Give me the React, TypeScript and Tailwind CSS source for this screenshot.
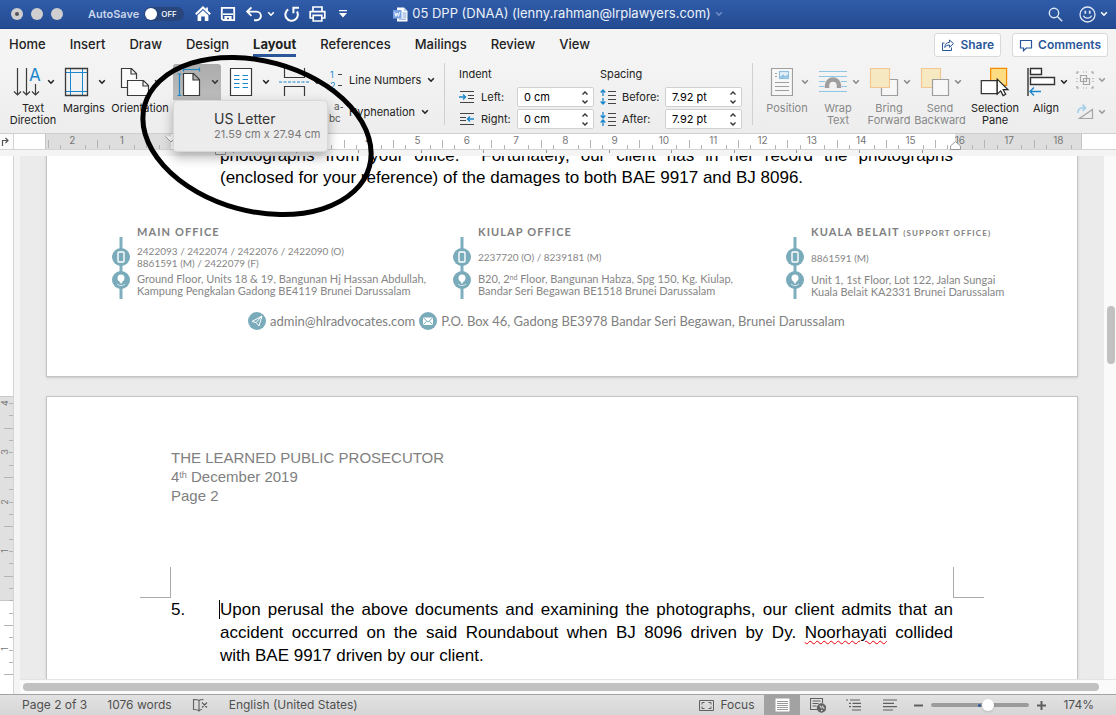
import React, { useState } from 'react';

const CM = 49.3;

const Chevron = ({ className = '' }: { className?: string }) => (
  <svg width="8" height="6" viewBox="0 0 8 6" fill="none" stroke="currentColor" strokeWidth="1.6" className={className}>
    <path d="M1.2 1.2 4 4.2 6.8 1.2" />
  </svg>
);

/* ---------- title bar ---------- */

const TitleBar = () => {
  const [autoSave, setAutoSave] = useState(false);

  return (
    <header className="grid h-[29px] shrink-0 grid-cols-[1fr_auto_1fr] items-center border-b border-[#1f4485] bg-linear-to-b from-[#305ca9] to-[#234b92] text-white">
      <div className="flex items-center pl-[11px]">
        <div className="flex gap-2">
          <span className="flex size-3 items-center justify-center rounded-full bg-[#cfcfcf]">
            <span className="size-1 rounded-full bg-[#555]" />
          </span>
          <span className="size-3 rounded-full bg-[#cfcfcf]" />
          <span className="size-3 rounded-full bg-[#cfcfcf]" />
        </div>
        <label className="ml-[25px] flex items-center gap-[5px] text-[11px] font-semibold text-[#c9d5ea]">
          AutoSave
          <input
            type="checkbox"
            className="peer sr-only"
            checked={autoSave}
            onChange={() => setAutoSave(!autoSave)}
          />
          <span className="flex h-3.5 w-10 items-center gap-1 rounded-full bg-[#28467c] pl-px text-[8px] font-medium text-white">
            <span className="size-3 rounded-full bg-white" />
            {autoSave ? 'ON' : 'OFF'}
          </span>
        </label>
        <div className="ml-[11px] flex items-center gap-[9px]">
          <button aria-label="Home">
            <svg width="16" height="16" viewBox="0 0 16 16" fill="none">
              <path d="M.8 8.2 8 1.4l7.2 6.8" stroke="#fff" strokeWidth="2" />
              <path d="M2.6 9.3 8 4.3l5.4 5V15H9.8v-4.6H6.2V15H2.6z" fill="#fff" />
              <path d="M12 1.5v3.2" stroke="#fff" strokeWidth="1.8" />
            </svg>
          </button>
          <button aria-label="Save">
            <svg width="16" height="16" viewBox="0 0 16 16" fill="none">
              <path d="M1.8 1.8h12.4v12.4H3.4L1.8 12.8z" stroke="#fff" strokeWidth="1.8" />
              <path d="M3 8.2h10" stroke="#fff" strokeWidth="1.6" />
              <path d="M4.4 10h7.2v4.4H9v-2.6H7v2.6H4.4z" fill="#fff" />
            </svg>
          </button>
          <button aria-label="Undo" className="flex items-center gap-1">
            <svg width="18" height="16" viewBox="0 0 18 16" fill="none" stroke="#fff" strokeWidth="1.9">
              <path d="M6.4 1.4 2.2 5.6l4.2 4.2M2.4 5.6h9.2a4.2 4.2 0 0 1 0 8.6H9" />
            </svg>
            <Chevron />
          </button>
          <button aria-label="Redo">
            <svg width="16" height="16" viewBox="0 0 16 16" fill="none" stroke="#fff" strokeWidth="2">
              <path d="M4.200 3.400A6.200 6.200 0 1 0 13 5.500M9.400 7.200V1.800H15" />
            </svg>
          </button>
          <button aria-label="Print">
            <svg width="17" height="16" viewBox="0 0 17 16" fill="none" stroke="#fff" strokeWidth="1.7">
              <path d="M4 5.4V1h9v4.4M4 12H1.2V5.6h14.6V12H13M4.2 9.4h8.6V15H4.2z" />
            </svg>
          </button>
          <button aria-label="Customize toolbar" className="ml-1">
            <svg width="8" height="8" viewBox="0 0 8 8" fill="#fff">
              <path d="M0 0h8v1.2H0zM0 3h8L4 7.4z" />
            </svg>
          </button>
        </div>
      </div>
      <div className="flex items-center gap-1 text-[13px] text-[#edf2fa]">
        <svg width="15" height="15" viewBox="0 0 15 15">
          <path d="M4 .5h7L14.5 4v10.5H4z" fill="#fff" />
          <path d="M11 .5V4h3.5z" fill="#b9cbe8" />
          <path d="M9.5 6h4M9.5 8h4M9.5 10h4M6 12.2h7" stroke="#7d9fd6" />
          <rect y="3" width="8.5" height="8.5" fill="#7ba3e4" />
          <path d="m1.700 5.300 1.200 4 1.300-3.400 1.300 3.400 1.200-4" fill="none" stroke="#fff" />
        </svg>
        <h1>05 DPP (DNAA) (lenny.rahman@lrplawyers.com)</h1>
        <Chevron className="text-[#6f8fc6]" />
      </div>
      <div className="flex items-center justify-end pr-[8px]">
        <button aria-label="Search">
          <svg width="15" height="15" viewBox="0 0 15 15" fill="none" stroke="#dfe7f4" strokeWidth="1.4">
            <circle cx="6" cy="6" r="4.7" />
            <path d="m9.400 9.400 4.800 4.800" />
          </svg>
        </button>
        <button aria-label="Feedback" className="ml-4 flex items-center gap-1">
          <svg width="17" height="17" viewBox="0 0 17 17" fill="none" stroke="#dfe7f4" strokeWidth="1.3">
            <circle cx="8.5" cy="8.5" r="7.5" />
            <path d="M6.300 4.800v3M10.700 4.800v3" strokeWidth="1.7" />
            <path d="M4.500 9.600c1.200 3.400 6.800 3.400 8 0" />
          </svg>
          <Chevron />
        </button>
      </div>
    </header>
  );
};

/* ---------- tabs ---------- */

const tabs = ['Home', 'Insert', 'Draw', 'Design', 'Layout', 'References', 'Mailings', 'Review', 'View'];

const Tabs = () => (
  <div className="flex h-[31px] shrink-0 items-end justify-between bg-[#f4f4f4] pr-2 pb-[3px] pl-[9px]">
    <nav className="flex gap-6 text-[13px] leading-[19px] text-[#222]">
      {tabs.map((tab) => (
        <a
          key={tab}
          href="#"
          className={tab === 'Layout' ? 'border-b-3 border-[#2b579a] font-bold' : 'border-b-3 border-transparent font-medium'}
        >
          {tab}
        </a>
      ))}
    </nav>
    <div className="flex gap-[11px] text-[12px] font-semibold text-[#2b579a]">
      <button className="flex h-6 items-center gap-[5px] rounded-[3px] border border-[#d9d9d9] bg-white px-1.5">
        <svg width="14" height="14" viewBox="0 0 14 14" fill="none" stroke="#2b579a">
          <path d="M3.500 5H1.500v7.500h9V9.500" />
          <path d="M8.500 2v2.300C5.500 4.300 4 6.500 3.800 9.500c1.200-1.800 2.500-2.500 4.700-2.500v2.300L12.500 5.600z" />
        </svg>
        Share
      </button>
      <button className="flex h-6 items-center gap-[5px] rounded-[3px] border border-[#d9d9d9] bg-white px-1.5">
        <svg width="14" height="14" viewBox="0 0 14 14" fill="none" stroke="#2b579a" strokeWidth="1.2">
          <path d="M1.500 2.500h11v7.500H7.300L4.500 12.700V10h-3z" />
        </svg>
        Comments
      </button>
    </div>
  </div>
);

/* ---------- ribbon ---------- */

interface ToolProps {
  label?: string;
  name?: string;
  icon: React.ReactNode;
  chevron?: boolean;
  disabled?: boolean;
  active?: boolean;
}

const Tool = ({ label, name, icon, chevron = true, disabled, active }: ToolProps) => (
  <button
    aria-label={name}
    disabled={disabled}
    className={disabled ? 'flex w-12 flex-col items-center text-[#888]' : 'flex w-12 flex-col items-center text-[#222]'}
  >
    <span
      className={
        active
          ? 'flex h-9 w-full items-center justify-between rounded-t-[3px] bg-linear-to-b from-[#acacac] to-[#bdbdbd] px-1 text-[#333]'
          : 'flex h-9 w-full items-center justify-between px-1'
      }
    >
      <span className={disabled ? 'opacity-45' : ''}>{icon}</span>
      {chevron && <Chevron className="-mr-0.5 shrink-0" />}
    </span>
    {label && <span className="flex justify-center pt-0.5 text-[11px] leading-3 whitespace-pre">{label}</span>}
  </button>
);

const iconProps = { height: 30, fill: 'none', stroke: '#3a3a3a' };
const BLUE = '#1a86cc';

const TextDirectionIcon = () => (
  <svg width="29" viewBox="0 0 29 30" {...iconProps} strokeWidth="1.2" className="-mr-1 overflow-visible">
    <path d="M4.500 1v27M1 24.500l3.500 3.500L8 24.500M13.500 1v27M10 24.500l3.500 3.500 3.500-3.500M22.500 17v11M19 24.500l3.500 3.500 3.500-3.500" />
    <text x="16" y="14" fontSize="17" fontFamily="Inter, sans-serif" fill={BLUE} stroke="none">A</text>
  </svg>
);

const MarginsIcon = () => (
  <svg width="25" viewBox="0 0 25 30" {...iconProps}>
    <path d="M6.500 2v26M18.500 2v26M2 5.500h21M2 24.500h21" stroke={BLUE} />
    <path d="M1.500 1.500h22v27h-22z" strokeWidth="1.3" />
  </svg>
);

const OrientationIcon = () => (
  <svg width="30" viewBox="0 0 30 30" {...iconProps} strokeWidth="1.2">
    <path d="M7 20.500H1.500v-19h10l5 5V12M11 1.500V7h5.500" fill="#fbfbfb" />
    <path d="M7.500 13.500h16l5 5v10h-21zM23 13.500V19h5.500" fill="#fbfbfb" />
  </svg>
);

const SizeIcon = () => (
  <svg width="24" viewBox="0 0 24 30" {...iconProps} strokeWidth="1.2">
    <path d="M6 2.500h16.500M6.500.5v4M22.500.5v4M2.500 7v21M.5 7h4M.5 28.500h4" stroke={BLUE} />
    <path d="M6.500 6.500h10l6 6v16h-16zM16 6.500V13h6.500" fill="#fff" />
  </svg>
);

const ColumnsIcon = () => (
  <svg width="26" viewBox="0 0 26 30" {...iconProps} strokeWidth="1.2">
    <path d="M2.500 1.500h21v27h-21z" fill="#fff" />
    <path d="M6 8.500h5.500M14.500 8.500H20M6 12.500h5.500M14.500 12.500H20M6 16.500h5.500M14.500 16.500H20M6 20.500h5.500M14.500 20.500H20" stroke={BLUE} />
  </svg>
);

const BreaksIcon = () => (
  <svg width="30" viewBox="0 0 30 30" {...iconProps} strokeWidth="1.2">
    <path d="M5.500 1v9.500h20V1M5.500 29v-9.500h20V29" />
    <path d="M0 15h30" stroke={BLUE} strokeDasharray="3 1.5" />
  </svg>
);

const PositionIcon = () => (
  <svg width="26" viewBox="0 0 26 30" {...iconProps} strokeWidth="1.2">
    <path d="M4.500 1.500h21v27h-21z" fill="#fff" />
    <path d="M8 6.500h2M8 9.500h2M8 15.500h14M8 19.500h14M8 23.500h14" />
    <rect x="12.5" y="4.5" width="9" height="7" fill="#d6ecfa" stroke={BLUE} />
    <path d="m13 11 3-3 2 2 2-1.500 1.500 2" fill={BLUE} stroke={BLUE} />
  </svg>
);

const WrapTextIcon = () => (
  <svg width="30" viewBox="0 0 30 30" {...iconProps}>
    <path d="M1 4.500h28M1 9.500h28M1 14.500h6M23 14.500h6M1 19.500h5M24 19.500h5M1 24.500h28" stroke="#1691d4" strokeWidth="1.2" />
    <path d="M9 21v-2.500a6 6 0 0 1 12 0V21" strokeWidth="4.5" />
  </svg>
);

const BringForwardIcon = () => (
  <svg width="30" viewBox="0 0 30 30" {...iconProps} strokeWidth="1.2">
    <path d="M12.500 12.500h16v16h-16z" fill="#fff" />
    <path d="M1.500 1.500h19v19h-19z" fill="#fddf86" stroke="#f59423" />
  </svg>
);

const SendBackwardIcon = () => (
  <svg width="30" viewBox="0 0 30 30" {...iconProps} strokeWidth="1.2">
    <path d="M1.500 1.500h19v19h-19z" fill="#fddf86" stroke="#f59423" />
    <path d="M12.500 12.500h16v16h-16z" fill="#fff" />
  </svg>
);

const SelectionPaneIcon = () => (
  <svg width="36" viewBox="0 0 36 32" {...iconProps} strokeWidth="1.3">
    <path d="M15.500 1.500h17v18h-17z" fill="#fddc82" stroke="#f28a00" />
    <path d="M5.500 14.500h17v14h-17z" fill="#fff" stroke="#333" />
    <path d="M22.500 13v16l3.700-3.500 2.600 5 2.700-1.500-2.600-4.800h5z" fill="#fff" stroke="#222" />
  </svg>
);

const AlignIcon = () => (
  <svg width="30" viewBox="0 0 30 30" {...iconProps} stroke="#333" strokeWidth="1.4">
    <path d="M2 1v28" />
    <path d="M4.500 1.500h11v6h-11zM4.500 10.500h24v7h-24z" fill="#fff" />
    <path d="M4 24.500h11M8 20.500l-4 4 4 4" stroke={BLUE} />
  </svg>
);

interface SpinProps {
  id: string;
  label: string;
  value: string;
  icon: React.ReactNode;
  labelClass: string;
}

const SpinRow = ({ id, label, value, icon, labelClass }: SpinProps) => (
  <div className="flex h-5 items-center">
    {icon}
    <label htmlFor={id} className={labelClass}>{label}</label>
    <div className="flex h-5 w-[77px] items-center justify-between rounded-[2px] border border-[#d0d0d0] bg-white pr-1 pl-1.5">
      <input id={id} defaultValue={value} className="w-[50px] bg-transparent text-[11px] text-black outline-none" />
      <svg width="8" height="15" viewBox="0 0 8 15" fill="none" stroke="#333" strokeWidth="1.4">
        <path d="M1.500 4.500 4 2l2.500 2.500M1.500 10.500 4 13l2.500-2.500" />
      </svg>
    </div>
  </div>
);

const Divider = () => <div className="mt-[3px] h-[62px] w-px shrink-0 bg-[#d0d0d0]" />;

const SizeMenu = () => (
  <div className="absolute top-9 left-0 w-[155px] rounded-[4px] border border-[#d8d8d8] bg-[#ececec] shadow-[0_5px_12px_rgba(0,0,0,0.3)]">
    <button className="flex w-full flex-col py-2.5 pl-10 text-left whitespace-nowrap">
      <span className="text-[14px] leading-4 text-[#333]">US Letter</span>
      <span className="text-[11px] leading-3.5 text-[#777]">21.59 cm x 27.94 cm</span>
    </button>
  </div>
);

const Ribbon = () => (
  <div className="relative z-20 flex h-[74px] shrink-0 border-b border-[#cfcfcf] bg-linear-to-b from-[#f4f4f4] to-[#ededed] pl-[9px] text-[11px] text-[#222]">
    <div className="flex gap-[3px] pt-1">
      <Tool label={'Text\nDirection'} icon={<TextDirectionIcon />} />
      <Tool label="Margins" icon={<MarginsIcon />} />
      <div className="flex pl-[5px]">
        <Tool label="Orientation" icon={<OrientationIcon />} />
      </div>
      <div className="relative ml-1.5 flex">
        <Tool name="Size" icon={<SizeIcon />} active />
        <SizeMenu />
      </div>
      <Tool name="Columns" icon={<ColumnsIcon />} />
      <Tool name="Breaks" icon={<BreaksIcon />} />
    </div>
    <div className="ml-1.5 flex w-[115px] flex-col pt-1">
      <button className="flex h-8 items-center">
        <svg width="14" height="22" viewBox="0 0 14 22" fill={BLUE} fontSize="9" fontFamily="Inter, sans-serif">
          <text x="1" y="9">1</text>
          <text x="1" y="20">2</text>
          <path d="M9 5.500h4M9 16.500h4" stroke="#444" />
        </svg>
        <span className="mr-1.5 ml-1.5">Line Numbers</span>
        <Chevron />
      </button>
      <button className="flex h-8 items-center">
        <svg width="14" height="24" viewBox="0 0 14 24" fill="#555" fontSize="10" fontFamily="Inter, sans-serif">
          <text x="5" y="10">a</text>
          <text x="0" y="22">bc</text>
          <path d="M11.500 7.500H14" stroke="#555" />
        </svg>
        <span className="mr-1.5 ml-1.5">Hyphenation</span>
        <Chevron />
      </button>
    </div>
    <Divider />
    <div className="ml-3.5 flex flex-col gap-[5px] pt-1.5">
      <h2 className="leading-4">Indent</h2>
      <div className="flex flex-col gap-0.5">
        <SpinRow
          id="indent-left"
          label="Left:"
          value="0 cm"
          labelClass="ml-[7px] w-9"
          icon={
            <svg width="15" height="14" viewBox="0 0 15 14" fill="none" stroke="#444">
              <path d="M1 1.500h14M9 5.500h6M9 8.500h6M1 12.500h14" />
              <path d="M0 7h6M4 4.500 6.500 7 4 9.500" stroke={BLUE} strokeWidth="1.4" />
            </svg>
          }
        />
        <SpinRow
          id="indent-right"
          label="Right:"
          value="0 cm"
          labelClass="ml-[7px] w-9"
          icon={
            <svg width="15" height="14" viewBox="0 0 15 14" fill="none" stroke="#444">
              <path d="M1 1.500h14M1 5.500h6M1 8.500h6M1 12.500h14" />
              <path d="M15 7H9M11 4.500 8.500 7l2.500 2.500" stroke={BLUE} strokeWidth="1.4" />
            </svg>
          }
        />
      </div>
    </div>
    <div className="ml-1.5 flex flex-col gap-[5px] pt-1.5">
      <h2 className="leading-4">Spacing</h2>
      <div className="flex flex-col gap-0.5">
        <SpinRow
          id="spacing-before"
          label="Before:"
          value="7.92 pt"
          labelClass="ml-1.5 w-[43px]"
          icon={
            <svg width="16" height="16" viewBox="0 0 16 16" fill="none" stroke="#444">
              <path d="M8 2.500h8M8 6.500h8M8 10.500h8M8 14.500h8" />
              <path d="M3 7V1.500M.7 3.500 3 1l2.300 2.500M3 9v5.500M.7 12.500 3 15l2.300-2.500" stroke={BLUE} strokeWidth="1.3" />
            </svg>
          }
        />
        <SpinRow
          id="spacing-after"
          label="After:"
          value="7.92 pt"
          labelClass="ml-1.5 w-[43px]"
          icon={
            <svg width="16" height="16" viewBox="0 0 16 16" fill="none" stroke="#444">
              <path d="M8 2.500h8M8 6.500h8M8 10.500h8M8 14.500h8" />
              <path d="M3 1v5.500M.7 4.500 3 7l2.300-2.500M3 15V9.500M.7 11.500 3 9l2.300 2.500" stroke={BLUE} strokeWidth="1.3" />
            </svg>
          }
        />
      </div>
    </div>
    <div className="ml-2.5 flex">
      <Divider />
    </div>
    <div className="ml-2.5 flex gap-[3px] pt-1">
      <Tool label="Position" icon={<PositionIcon />} disabled />
      <Tool label={'Wrap\nText'} icon={<WrapTextIcon />} disabled />
      <Tool label={'Bring\nForward'} icon={<BringForwardIcon />} disabled />
      <Tool label={'Send\nBackward'} icon={<SendBackwardIcon />} disabled />
      <div className="flex pl-1">
        <Tool label={'Selection\nPane'} icon={<SelectionPaneIcon />} chevron={false} />
      </div>
      <Tool label="Align" icon={<AlignIcon />} />
    </div>
    <div className="ml-1.5 flex flex-col pt-1 text-[#999]">
      <button disabled aria-label="Group" className="flex h-8 items-center gap-1">
        <svg width="18" height="18" viewBox="0 0 18 18" fill="none" stroke="#a5a5a5" strokeWidth="1.2">
          <path d="M4.500 4.500h6v6h-6zM7.500 7.500h6v6h-6z" />
          <path d="M1 3V1h2M15 1h2v2M1 15v2h2M17 15v2h-2M7 1h1M10 1h1M7 17h1M10 17h1M1 7v1M1 10v1M17 7v1M17 10v1" />
        </svg>
        <Chevron />
      </button>
      <button disabled aria-label="Rotate" className="flex h-8 items-center gap-1">
        <svg width="18" height="18" viewBox="0 0 18 18" fill="none" stroke="#a5a5a5" strokeWidth="1.2">
          <path d="M3.500 15.500h13v-9z" />
          <path d="M2 10C1.500 6 5 4 9 5M6.500 1.500 9.500 5 6.500 8" stroke="#9fcdea" strokeWidth="1.5" />
        </svg>
        <Chevron />
      </button>
    </div>
  </div>
);

/* ---------- rulers ---------- */

const hTicks = Array.from({ length: 84 }, (_, i) => i - 10).filter((q) => q % 4 !== 0);
const hLabels = [-2, -1, 4, 5, 6, 7, 8, 9, 10, 11, 12, 13, 14, 15, 16, 17, 18];
const tabStops = Array.from({ length: 12 }, (_, i) => 188 + i * 62.6);

const Ruler = () => (
  <div className="flex h-[22px] shrink-0 bg-[#f4f4f4]">
    <div className="flex h-4 w-3.5 items-center border-r border-b border-[#d4d4d4] bg-[#fbfbfb]">
      <svg width="10" height="11" viewBox="0 0 10 11" fill="none" stroke="#555" strokeWidth="1.2">
        <path d="M2.500 10V4.500H8M5.500 2 8 4.500 5.500 7" />
      </svg>
    </div>
    <div className="h-4 w-[31px] border-b border-[#d4d4d4] bg-white" />
    <svg height="22" className="min-w-0 flex-1" fontSize="10" fontFamily="Inter, sans-serif" fill="#777" textAnchor="middle">
      <rect width="100%" height="15" fill="#fff" />
      <rect width="126" height="15" fill="#dedede" />
      <rect x="910" width="126" height="15" fill="#dedede" />
      <path d="M.5 0v15M1036.500 0v15" stroke="#c4c4c4" />
      <path d="M0 15.500h2000" stroke="#d4d4d4" />
      {hTicks.map((q) => {
        const x = Math.round(126 + (q * CM) / 4) + 0.5;
        return <path key={q} d={q % 2 === 0 ? `M${x} 6v8` : `M${x} 11v4`} stroke="#b4b4b4" />;
      })}
      {hLabels.map((n) => (
        <text key={n} x={126 + n * CM} y="10">{Math.abs(n)}</text>
      ))}
      {tabStops.map((x) => (
        <path key={x} d={`M${Math.round(x) + 0.5} 16v3`} stroke="#999" />
      ))}
      <path d="M120.500 2.500 126 8l5.500-5.500M170.500 15.500h10v5h-10z" fill="#fff" stroke="#999" />
      <path d="M905.500 15.500v-3.500l5-4.500 5 4.500v3.500z" fill="#fff" stroke="#999" />
    </svg>
  </div>
);

const vLabels = [
  { n: 4, y: 247 },
  { n: 3, y: 296 },
  { n: 2, y: 346 },
  { n: 1, y: 395 },
  { n: 1, y: 493 },
];

const SideRuler = () => (
  <div className="w-3.5 shrink-0 overflow-hidden border-r border-[#d4d4d4] bg-white">
    <svg width="14" height="540" fontSize="9" fontFamily="Inter, sans-serif" fill="#777" textAnchor="middle">
      <rect y="240" width="14" height="204" fill="#e0e0e0" />
      <path d="M0 240.500h14M0 444.500h14" stroke="#c8c8c8" />
      {Array.from({ length: 23 }, (_, i) => {
        const y = Math.round(247 + (i * CM) / 4) + 0.5;
        return <path key={i} d={i % 4 === 2 ? `M4 ${y}h9` : `M9 ${y}h4`} stroke="#b4b4b4" />;
      })}
      {vLabels.map(({ n, y }) => (
        <text key={y} x="0" y="0" transform={`translate(8 ${y}) rotate(-90)`}>{n}</text>
      ))}
    </svg>
  </div>
);

/* ---------- letter ---------- */

const OfficeMarks = () => (
  <svg width="20" height="62" viewBox="0 0 20 62" className="mt-3 shrink-0">
    <path d="M10 0v62" stroke="#7fafbf" strokeWidth="3" />
    <circle cx="10" cy="20" r="9" fill="#7aabbb" />
    <circle cx="10" cy="43" r="9" fill="#7aabbb" />
    <rect x="7" y="15" width="6" height="10" rx="1" fill="none" stroke="#fff" strokeWidth="1.4" />
    <circle cx="10" cy="41" r="3.5" fill="#fff" />
    <path d="m7.500 43 2.500 4 2.500-4z" fill="#fff" />
    <path d="M6 47c2 2 6 2 8 0" fill="none" stroke="#d6e6ec" />
  </svg>
);

interface OfficeProps {
  title: string;
  note?: string;
  phones: string[];
  address: React.ReactNode[];
}

const Office = ({ title, note, phones, address }: OfficeProps) => (
  <div className="flex gap-1.5">
    <OfficeMarks />
    <div className="text-[11px] leading-3 whitespace-nowrap text-[#868686]">
      <h3 className="pt-px font-bold tracking-widest text-[#808080]">
        {title} {note && <small className="text-[8px]">{note}</small>}
      </h3>
      <div className="mt-[7px] flex h-6 flex-col justify-center text-[10px]">
        {phones.map((line) => (
          <p key={line}>{line}</p>
        ))}
      </div>
      <div className="mt-1">
        {address.map((line, i) => (
          <p key={i}>{line}</p>
        ))}
      </div>
    </div>
  </div>
);

const Letterhead = () => (
  <footer className="mt-9 pl-16 font-['Lato',sans-serif]">
    <div className="grid grid-cols-[341fr_333fr_292fr]">
      <Office
        title="MAIN OFFICE"
        phones={['2422093 / 2422074 / 2422076 / 2422090 (O)', '8861591 (M) / 2422079 (F)']}
        address={[
          'Ground Floor, Units 18 & 19, Bangunan Hj Hassan Abdullah,',
          'Kampung Pengkalan Gadong BE4119 Brunei Darussalam',
        ]}
      />
      <Office
        title="KIULAP OFFICE"
        phones={['2237720 (O) / 8239181 (M)']}
        address={[
          <>B20, 2<sup className="text-[7px] leading-none">nd</sup> Floor, Bangunan Habza, Spg 150, Kg. Kiulap,</>,
          'Bandar Seri Begawan BE1518 Brunei Darussalam',
        ]}
      />
      <Office
        title="KUALA BELAIT"
        note="(SUPPORT OFFICE)"
        phones={['8861591 (M)']}
        address={['Unit 1, 1st Floor, Lot 122, Jalan Sungai', 'Kuala Belait KA2331 Brunei Darussalam']}
      />
    </div>
    <div className="mt-3 flex items-center gap-1 pl-[137px] text-[13px] leading-5 whitespace-nowrap text-[#808080]">
      <svg width="18" height="18" viewBox="0 0 18 18">
        <circle cx="9" cy="9" r="9" fill="#7aabbb" />
        <path d="M4 9.500 14 4l-3 10-3-3.500zM8 10.500 14 4" fill="none" stroke="#fff" />
      </svg>
      <a href="#">admin@hlradvocates.com</a>
      <svg width="18" height="18" viewBox="0 0 18 18">
        <circle cx="9" cy="9" r="9" fill="#7aabbb" />
        <rect x="4" y="5.5" width="10" height="7.5" rx="1" fill="#fff" />
        <path d="m4.500 6 4.500 4 4.500-4M4.500 12.500l3-3M13.500 12.500l-3-3" fill="none" stroke="#7aabbb" />
      </svg>
      <span>P.O. Box 46, Gadong BE3978 Bandar Seri Begawan, Brunei Darussalam</span>
    </div>
  </footer>
);

const Letter = () => (
  <main className="flex min-w-0 flex-1 flex-col gap-[19px] overflow-hidden bg-[#ebebeb] px-[26px] font-['Liberation_Sans',Arial,sans-serif]">
    <section className="-mt-3 h-[233px] shrink-0 border border-[#c4c4c4] bg-white shadow-sm">
      <div className="pr-[124px] pl-[173px] text-[17px] leading-[22px] text-black">
        <p className="whitespace-nowrap [text-align-last:justify]">
          photographs from your office. &nbsp;Fortunately, our client has in her record the photographs
        </p>
        <p>(enclosed for your reference) of the damages to both BAE 9917 and BJ 8096.</p>
      </div>
      <Letterhead />
    </section>
    <section className="min-h-0 flex-1 border border-b-0 border-[#c4c4c4] bg-white px-[124px] pt-[51px] shadow-sm">
      <div className="text-[15px] leading-[19px] text-[#808080]">
        <p>THE LEARNED PUBLIC PROSECUTOR</p>
        <p>4<sup className="text-[9px] leading-none">th</sup> December 2019</p>
        <p>Page 2</p>
      </div>
      <div className="-mx-[31px] mt-[62px] flex justify-between">
        <span className="size-[31px] border-r border-b border-[#ababab]" />
        <span className="size-[31px] border-b border-l border-[#ababab]" />
      </div>
      <div className="flex text-[17px] leading-[23px] text-black">
        <span className="w-[49px] shrink-0">5.</span>
        <div className="min-w-0 flex-1 whitespace-nowrap">
          <p className="[text-align-last:justify]">
            <span className="-ml-px border-l border-black" />
            Upon perusal the above documents and examining the photographs, our client admits that an
          </p>
          <p className="[text-align-last:justify]">
            accident occurred on the said Roundabout when BJ 8096 driven by Dy.{' '}
            <span className="underline decoration-red-600 decoration-wavy decoration-1 underline-offset-2">Noorhayati</span> collided
          </p>
          <p>with BAE 9917 driven by our client.</p>
        </div>
      </div>
    </section>
  </main>
);

/* ---------- status bar ---------- */

const StatusBar = () => {
  const [zoom, setZoom] = useState(174);

  return (
    <footer className="flex h-[21px] shrink-0 items-center border-t border-[#a3a3a3] bg-linear-to-b from-[#e2e2e2] to-[#d6d6d6] pr-[22px] pl-[22px] text-[12px] text-[#505050]">
      <span>Page 2 of 3</span>
      <span className="ml-5">1076 words</span>
      <button aria-label="Spelling" className="ml-5">
        <svg width="17" height="14" viewBox="0 0 17 14" fill="none" stroke="#606060" strokeWidth="1.1">
          <path d="M7 2.500C6 1.500 4.500 1.500 1.500 1.500v10c3 0 4.500 0 5.500 1.500 1-1.500 1.500-1.500 3-1.500M7 2.500V13M7 2.500c1-1 2.500-1 4.500-1M10 4.500l5 5M15 4.500l-5 5" />
        </svg>
      </button>
      <span className="ml-5">English (United States)</span>
      <button className="ml-auto flex items-center gap-1.5">
        <svg width="15" height="11" viewBox="0 0 15 11" fill="none" stroke="#606060">
          <path d="M.5.500h14v10H.5z" />
          <path d="M3 4.500v-2h2.500M9.500 2.500H12v2M3 6.500v2h2.500M9.500 8.500H12v-2" />
        </svg>
        Focus
      </button>
      <div className="ml-2.5 flex h-full">
        <button aria-label="Print layout" className="flex w-9 items-center justify-center bg-[#a2a2a2]">
          <svg width="15" height="14" viewBox="0 0 15 14" fill="none">
            <path d="M.5.500h14v13H.5z" fill="#fff" />
            <path d="M2 3.500h11M2 5.500h11M2 7.500h11M2 9.500h11M2 11.500h11" stroke="#999" />
          </svg>
        </button>
        <button aria-label="Web layout" className="flex w-9 items-center justify-center">
          <svg width="16" height="15" viewBox="0 0 16 15" fill="none" stroke="#606060" strokeWidth="1.1">
            <path d="M7 11.500H.5V.5h12V5M2.500 3h8M2.500 5.500h6M2.500 8h4" />
            <circle cx="11.5" cy="10" r="4.2" fill="#606060" />
            <path d="M9.500 8c1.500 0 2 1 1.500 2.500M13 7.500c-1 1.500 0 2.500 1.500 3M11 13l1.500-1" stroke="#ddd" />
          </svg>
        </button>
        <button aria-label="Outline" className="flex w-9 items-center justify-center">
          <svg width="16" height="12" viewBox="0 0 16 12" fill="none" stroke="#606060" strokeWidth="1.2">
            <path d="M0 1h2M4 1h10M3 4.300h2M6.500 4.300H15M3 7.600h2M6.500 7.600H15M6 11h9" />
          </svg>
        </button>
        <button aria-label="Draft" className="flex w-9 items-center justify-center">
          <svg width="14" height="12" viewBox="0 0 14 12" stroke="#606060" strokeWidth="1.2">
            <path d="M0 1h14M0 4.300h11M0 7.600h14M0 11h10" />
          </svg>
        </button>
      </div>
      <div className="ml-1.5 flex items-center gap-2">
        <button aria-label="Zoom out">
          <svg width="9" height="9" viewBox="0 0 9 9" stroke="#606060" strokeWidth="2">
            <path d="M0 4.500h9" />
          </svg>
        </button>
        <div className="relative flex items-center">
          <input
            type="range"
            aria-label="Zoom"
            min="10"
            max="290"
            value={zoom}
            onChange={(e) => setZoom(Number(e.target.value))}
            className="h-3.5 w-[98px] appearance-none bg-transparent [&::-webkit-slider-runnable-track]:h-1 [&::-webkit-slider-runnable-track]:rounded-full [&::-webkit-slider-runnable-track]:bg-[#9b9b9b] [&::-webkit-slider-thumb]:-mt-1 [&::-webkit-slider-thumb]:size-3 [&::-webkit-slider-thumb]:appearance-none [&::-webkit-slider-thumb]:rounded-full [&::-webkit-slider-thumb]:bg-white [&::-webkit-slider-thumb]:shadow"
          />
          <span className="pointer-events-none absolute left-[47px] size-[3px] rounded-full bg-[#2b579a]" />
        </div>
        <button aria-label="Zoom in">
          <svg width="9" height="9" viewBox="0 0 9 9" stroke="#606060" strokeWidth="2">
            <path d="M0 4.500h9M4.500 0v9" />
          </svg>
        </button>
      </div>
      <span className="ml-[17px]">{zoom}%</span>
    </footer>
  );
};

export default function App() {
  return (
    <div className="relative flex h-screen flex-col overflow-hidden bg-[#f4f4f4] font-['Inter',sans-serif]">
      <TitleBar />
      <Tabs />
      <Ribbon />
      <Ruler />
      <div className="flex min-h-0 flex-1">
        <SideRuler />
        <div className="flex min-w-0 flex-1 flex-col pl-1.5">
          <div className="flex min-h-0 flex-1">
            <Letter />
            <div className="flex w-3 shrink-0 flex-col items-end bg-[#fafafa] pt-[150px] pr-px">
              <div className="h-[58px] w-2 rounded-full bg-[#c1c1c1]" />
            </div>
          </div>
          <div className="flex h-[15px] shrink-0 items-center border-t border-[#e4e4e4] bg-[#fafafa] pr-[17px] pl-[3px]">
            <div className="h-2 w-full rounded-full bg-[#c1c1c1]" />
          </div>
        </div>
      </div>
      <StatusBar />

      {/* hand-drawn ring round the size menu */}
      <svg width="240" height="166" viewBox="0 0 240 166" className="pointer-events-none absolute top-[53px] left-[137px] z-30">
        <ellipse cx="120" cy="83" rx="116.5" ry="75" transform="rotate(15.2 120 83)" fill="none" stroke="#000" strokeWidth="5" />
      </svg>
    </div>
  );
}
